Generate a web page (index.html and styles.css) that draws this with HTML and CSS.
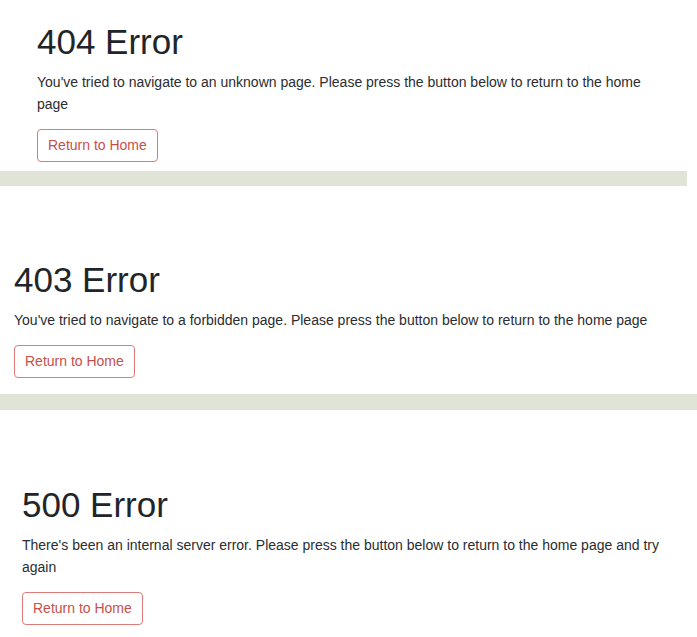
FILE: index.html
```html
<!DOCTYPE html>
<html lang="en">
<head>
<meta charset="utf-8">
<title>Errors</title>
<link rel="stylesheet" href="styles.css">
</head>
<body>
  <section class="error error-404">
    <h1 class="error-title">404 Error</h1>
    <p class="error-text">You've tried to navigate to an unknown page. Please press the button below to return to the home page</p>
    <button class="btn" type="button">Return to Home</button>
  </section>
  <div class="band band-short"></div>
  <section class="error error-403">
    <h1 class="error-title">403 Error</h1>
    <p class="error-text">You've tried to navigate to a forbidden page. Please press the button below to return to the home page</p>
    <button class="btn" type="button">Return to Home</button>
  </section>
  <div class="band band-full"></div>
  <section class="error error-500">
    <h1 class="error-title">500 Error</h1>
    <p class="error-text">There's been an internal server error. Please press the button below to return to the home page and try again</p>
    <button class="btn" type="button">Return to Home</button>
  </section>
</body>
</html>
```

FILE: styles.css
```css
html, body {
  margin: 0;
  padding: 0;
  background: #ffffff;
}

body {
  font-family: "Liberation Sans", Arial, sans-serif;
  color: #212529;
  font-size: 14px;
}

.error {
  display: flex;
  flex-direction: column;
  align-items: flex-start;
}

.error-404 {
  width: 687px;
  box-sizing: border-box;
  padding: 22px 37px 9px 37px;
}

.error-403 {
  padding: 74px 14px 16px 14px;
}

.error-500 {
  padding: 75px 22px 8px 22px;
}

.error-title {
  margin: 0 0 9px 0;
  font-size: 35px;
  line-height: 40px;
  font-weight: 400;
  color: #212529;
}

.error-text {
  margin: 0 0 14px 0;
  font-size: 14px;
  line-height: 22px;
  color: #2a2d31;
}

.btn {
  font-family: "Liberation Sans", Arial, sans-serif;
  font-size: 14px;
  line-height: 21px;
  padding: 5px 10px;
  margin: 0;
  color: #c74f4b;
  background: #ffffff;
  border: 1px solid #de7a78;
  border-radius: 4px;
  cursor: pointer;
}

.band {
  background: #dfe4d6;
}

.band-short {
  width: 687px;
  height: 15px;
}

.band-full {
  width: 100%;
  height: 16px;
}
```
